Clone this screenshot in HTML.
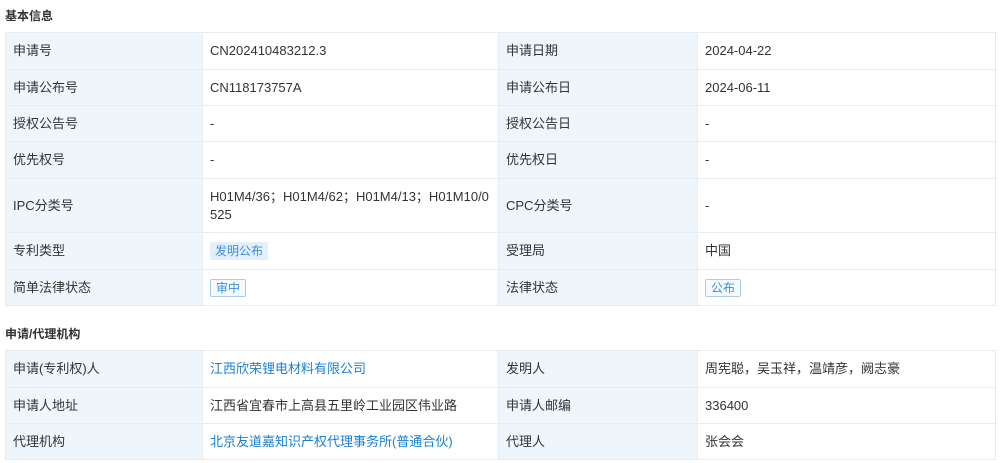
<!DOCTYPE html>
<html><head><meta charset="utf-8"><style>
body{margin:0;width:1000px;height:463px;background:#fff;font-family:"Liberation Sans","Noto Sans CJK SC",sans-serif;font-size:13px;color:#333;overflow:hidden;position:relative}
.h{position:absolute;left:5px;font-size:12px;font-weight:bold;color:#333}
table{position:absolute;left:5px;width:990px;border-collapse:collapse;table-layout:fixed}
td{border:1px solid #e5edf2;padding:0 7px;vertical-align:middle;line-height:18px}
td.l{background:#eef6fb}
.a{color:#1b7fd0}
.t1{display:inline-block;background:#e3f0fb;color:#3b8fd8;padding:0 5px;line-height:18px;border-radius:2px;font-size:12px}
.t2{display:inline-block;border:1px solid #a9cde9;background:#f5faff;color:#3b8fd8;padding:0 5px;line-height:16px;border-radius:2px;font-size:12px}
</style></head><body>
<div class="h" style="top:7px">基本信息</div>
<table style="top:32px">
<colgroup><col style="width:197px"><col style="width:296px"><col style="width:199px"><col style="width:298px"></colgroup>
<tr style="height:37px"><td class="l">申请号</td><td>CN202410483212.3</td><td class="l">申请日期</td><td>2024-04-22</td></tr>
<tr style="height:36px"><td class="l">申请公布号</td><td>CN118173757A</td><td class="l">申请公布日</td><td>2024-06-11</td></tr>
<tr style="height:36px"><td class="l">授权公告号</td><td>-</td><td class="l">授权公告日</td><td>-</td></tr>
<tr style="height:37px"><td class="l">优先权号</td><td>-</td><td class="l">优先权日</td><td>-</td></tr>
<tr style="height:54px"><td class="l">IPC分类号</td><td style="word-break:break-all">H01M4/36；H01M4/62；H01M4/13；H01M10/0525</td><td class="l">CPC分类号</td><td>-</td></tr>
<tr style="height:37px"><td class="l">专利类型</td><td><span class="t1">发明公布</span></td><td class="l">受理局</td><td>中国</td></tr>
<tr style="height:36px"><td class="l">简单法律状态</td><td><span class="t2">审中</span></td><td class="l">法律状态</td><td><span class="t2">公布</span></td></tr>
</table>
<div class="h" style="top:325px">申请/代理机构</div>
<table style="top:350px">
<colgroup><col style="width:197px"><col style="width:296px"><col style="width:199px"><col style="width:298px"></colgroup>
<tr style="height:37px"><td class="l">申请(专利权)人</td><td class="a">江西欣荣锂电材料有限公司</td><td class="l">发明人</td><td>周宪聪，吴玉祥，温靖彦，阙志豪</td></tr>
<tr style="height:36px"><td class="l">申请人地址</td><td>江西省宜春市上高县五里岭工业园区伟业路</td><td class="l">申请人邮编</td><td>336400</td></tr>
<tr style="height:36px"><td class="l">代理机构</td><td class="a">北京友道嘉知识产权代理事务所(普通合伙)</td><td class="l">代理人</td><td>张会会</td></tr>
</table>
</body></html>
